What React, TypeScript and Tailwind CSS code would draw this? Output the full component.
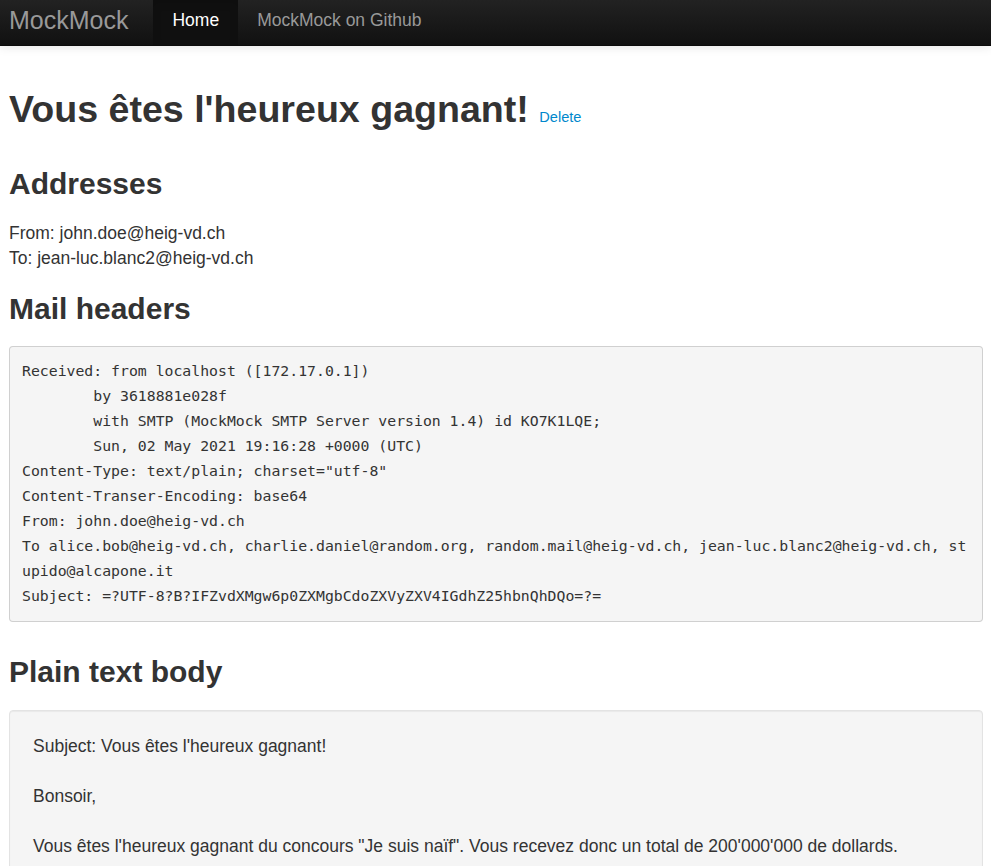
const headers = `Received: from localhost ([172.17.0.1])
        by 3618881e028f
        with SMTP (MockMock SMTP Server version 1.4) id KO7K1LQE;
        Sun, 02 May 2021 19:16:28 +0000 (UTC)
Content-Type: text/plain; charset="utf-8"
Content-Transer-Encoding: base64
From: john.doe@heig-vd.ch
To alice.bob@heig-vd.ch, charlie.daniel@random.org, random.mail@heig-vd.ch, jean-luc.blanc2@heig-vd.ch, st
upido@alcapone.it
Subject: =?UTF-8?B?IFZvdXMgw6p0ZXMgbCdoZXVyZXV4IGdhZ25hbnQhDQo=?=`;

const body = `Subject: Vous êtes l'heureux gagnant!

Bonsoir,

Vous êtes l'heureux gagnant du concours "Je suis naïf". Vous recevez donc un total de 200'000'000 de dollards.`;

function Navbar() {
  return (
    <nav className="h-[46px] flex bg-gradient-to-b from-[#222222] to-[#111111] border-b border-[#0c0c0c] shadow-[0_1px_10px_rgba(0,0,0,0.1)]">
      <a href="#" className="flex items-center pb-[4px] pl-[9px] pr-[25px] text-[25px] text-[#999999]">
        MockMock
      </a>
      <a
        href="#"
        className="flex items-center pb-[4px] px-[19px] text-[17.5px] text-white bg-[#101010] shadow-[inset_0_3px_8px_rgba(0,0,0,0.125)]"
      >
        Home
      </a>
      <a href="#" className="flex items-center pb-[4px] px-[19px] text-[17.5px] text-[#999999]">
        MockMock on Github
      </a>
    </nav>
  );
}

export default function App() {
  return (
    <div className="min-h-screen bg-white text-[#333333] font-['Liberation_Sans',Arial,sans-serif]">
      <Navbar />

      <main className="pl-[9px] pr-[8px]">
        <h1 className="mt-[43px] text-[37.6px] leading-[40.7px] font-bold">
          Vous êtes l'heureux gagnant!{" "}
          <a href="#" className="text-[14.6px] font-normal text-[#0088cc]">
            Delete
          </a>
        </h1>

        <h2 className="mt-[29px] text-[30px] leading-[33px] font-bold">Addresses</h2>
        <p className="mt-[21.6px] text-[17.5px] leading-[25px]">
          From: john.doe@heig-vd.ch
          <br />
          To: jean-luc.blanc2@heig-vd.ch
        </p>

        <h2 className="mt-[20.7px] text-[30px] leading-[33px] font-bold">Mail headers</h2>
        <pre className="mt-[21.3px] pt-[11px] pb-[13px] px-[12px] bg-[#f5f5f5] border border-[rgba(0,0,0,0.15)] rounded-[4px] whitespace-pre text-[14.8px] leading-[25px] text-[#333333] font-['DejaVu_Sans_Mono',monospace] overflow-hidden">
          {headers}
        </pre>

        <h2 className="mt-[33px] text-[30px] leading-[33px] font-bold">Plain text body</h2>
        <div className="mt-[22px] pt-[23px] pb-[24px] px-[23px] bg-[#f5f5f5] border border-[#e3e3e3] rounded-[4px] shadow-[inset_0_1px_1px_rgba(0,0,0,0.05)]">
          <p className="whitespace-pre-wrap text-[17.5px] leading-[25px]">{body}</p>
        </div>
      </main>
    </div>
  );
}
